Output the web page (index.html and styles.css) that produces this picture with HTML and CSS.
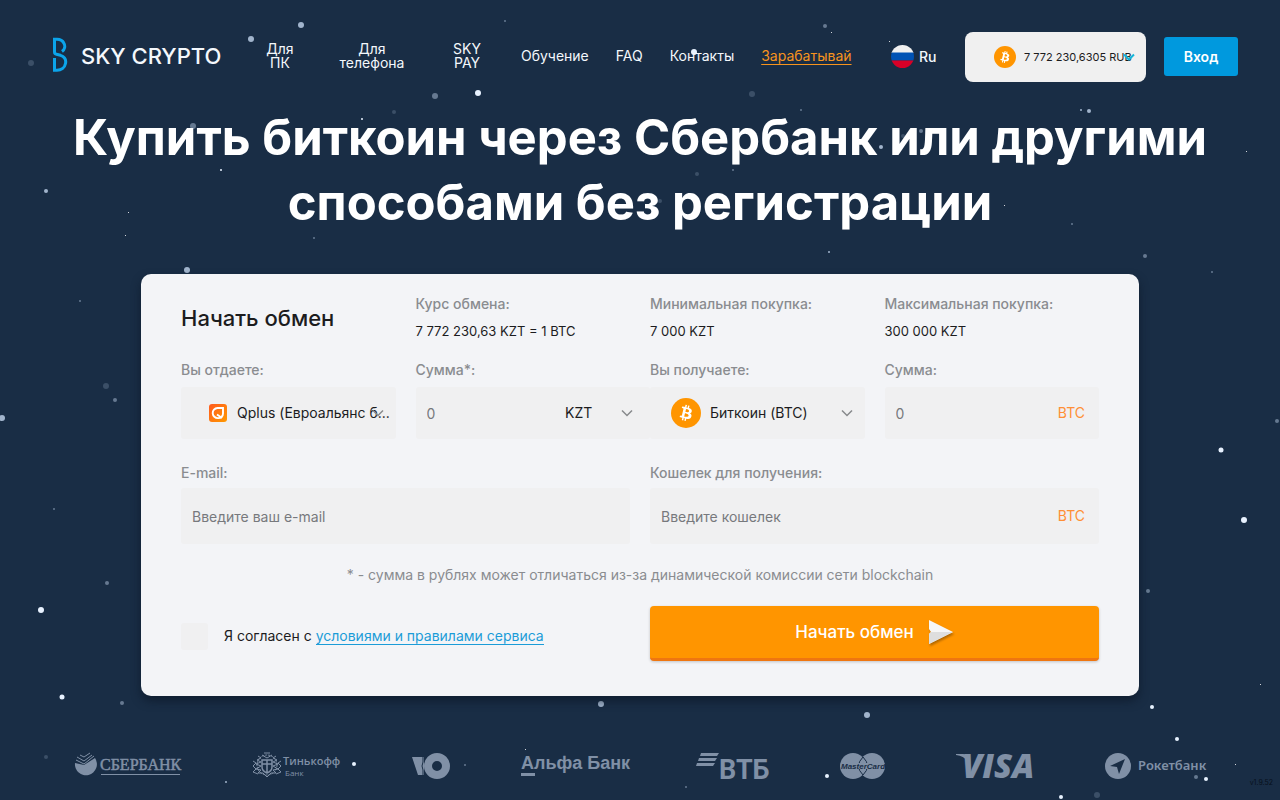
FILE: index.html
```html
<!DOCTYPE html>
<html lang="ru">
<head>
<meta charset="utf-8">
<meta name="viewport" content="width=device-width, initial-scale=1">
<title>Sky Crypto</title>
<link rel="stylesheet" href="styles.css">
</head>
<body>
<div class="page">
<svg class="sky" viewBox="0 0 1280 800" preserveAspectRatio="xMidYMid slice" aria-hidden="true" fill="#c3d6ee">
  <g opacity=".2"><circle cx="31" cy="63" r="3"/><circle cx="752" cy="94" r="3"/><circle cx="106" cy="386" r="3"/><circle cx="697" cy="174" r="2"/><circle cx="1097" cy="795" r="3"/><circle cx="660" cy="201" r="2"/><circle cx="394" cy="112" r="2"/><circle cx="46" cy="757" r="2"/><circle cx="903" cy="136" r="2"/></g>
  <g opacity=".45"><circle cx="435" cy="96" r="3"/><circle cx="193" cy="126" r="3"/><circle cx="825" cy="26" r="2"/><circle cx="505" cy="21" r="1"/><circle cx="1145" cy="256" r="2"/><circle cx="1212" cy="272" r="1"/><circle cx="107" cy="583" r="2"/><circle cx="1148" cy="591" r="2"/><circle cx="115" cy="400" r="2"/><circle cx="122" cy="703" r="2"/><circle cx="1196" cy="777" r="2"/><circle cx="856" cy="133" r="2"/><circle cx="921" cy="131" r="2"/><circle cx="1072" cy="224" r="1"/><circle cx="465" cy="765" r="1"/><circle cx="54" cy="509" r="1"/><circle cx="801" cy="110" r="1"/><circle cx="80" cy="301" r="1"/><circle cx="314" cy="238" r="1"/><circle cx="733" cy="170" r="1"/><circle cx="1277" cy="421" r="2"/><circle cx="686" cy="787" r="1"/></g>
  <g opacity=".8"><circle cx="301" cy="25" r="3"/><circle cx="251" cy="39" r="3"/><circle cx="46" cy="191" r="2"/><circle cx="187" cy="270" r="3"/><circle cx="601" cy="704" r="3"/><circle cx="867" cy="715" r="3"/><circle cx="1089" cy="111" r="2"/><circle cx="1081" cy="110" r="1"/><circle cx="891" cy="198" r="3"/><circle cx="829" cy="252" r="1"/><circle cx="226" cy="782" r="1"/><circle cx="2" cy="418" r="3"/><circle cx="881" cy="147" r="2"/></g>
  <g fill="#e8f2ff"><circle cx="478" cy="93" r="3"/><circle cx="694" cy="52" r="3"/><circle cx="1221" cy="450" r="2.500"/><circle cx="1244" cy="520" r="3"/><circle cx="41" cy="610" r="3"/><circle cx="62" cy="697" r="2.500"/><circle cx="1152" cy="707" r="2"/><circle cx="1177" cy="739" r="2"/><circle cx="354" cy="764" r="2"/><circle cx="827" cy="776" r="2"/><circle cx="1061" cy="797" r="2"/><circle cx="1206" cy="779" r="2"/><circle cx="362" cy="119" r="1"/><circle cx="221" cy="170" r="1"/><circle cx="1021" cy="162" r="1"/></g>
  <g fill="#fff" opacity=".8"><path d="M831 32h1v1h-1zM889 41h1v1h-1zM128 212h1v1h-1zM125 235h1v1h-1zM1154 151h1v1h-1zM1004 205h1v1h-1zM525 749h1v1h-1zM1235 764h1v1h-1zM1260 684h1v1h-1zM1246 151h1v1h-1z"/></g>
</svg>
<svg width="0" height="0" class="defs" aria-hidden="true"><defs>
  <symbol id="btc" viewBox="0 0 32 32"><circle cx="16" cy="16" r="16" fill="#ff9500"/><path transform="translate(2 2) scale(.87)" fill="#fff" d="M23.189 14.02c.314-2.096-1.283-3.223-3.465-3.975l.708-2.84-1.728-.43-.69 2.765c-.454-.114-.92-.22-1.385-.326l.695-2.783L15.596 6l-.708 2.839c-.376-.086-.746-.17-1.104-.26l.002-.009-2.384-.595-.46 1.846s1.283.294 1.256.312c.7.175.826.638.805 1.006l-.806 3.235c.048.012.11.03.18.057l-.183-.045-1.13 4.532c-.086.212-.303.531-.793.41.018.025-1.256-.313-1.256-.313l-.858 1.978 2.25.561c.418.105.828.215 1.231.318l-.715 2.872 1.727.43.708-2.84c.472.127.93.245 1.378.357l-.706 2.828 1.728.43.715-2.866c2.948.558 5.164.333 6.097-2.333.752-2.146-.037-3.385-1.588-4.192 1.13-.26 1.98-1.003 2.207-2.538zm-3.95 5.538c-.533 2.147-4.148.986-5.32.695l.95-3.805c1.172.293 4.929.872 4.37 3.11zm.535-5.569c-.487 1.953-3.495.96-4.47.717l.86-3.45c.975.243 4.118.696 3.61 2.733z"/></symbol>
  <symbol id="chevron" viewBox="0 0 12 8"><path d="M1 1.500l5 5 5-5" fill="none" stroke="currentColor" stroke-width="1.500"/></symbol>
</defs></svg>

<header class="header">
  <a class="logo" href="#">
    <svg class="logo-mark" width="16" height="36" viewBox="0 0 16 36" fill="none" stroke="#0ba4ea" stroke-width="3" aria-hidden="true"><path d="M10 14.500C12.800 12.500 13.500 9 11.800 6 10.500 3.300 8 2.200 5 2.200H2.500V15c0 1.500.8 2 2 2.200l4 1.100c3.800 1.300 5.800 4.300 5 8.200-.8 4.500-4.500 6.700-8.500 6.700H2.500V21"/></svg>
    <span>SKY CRYPTO</span>
  </a>
  <nav class="nav">
    <a class="nav-pc" href="#">Для ПК</a>
    <a class="nav-phone" href="#">Для телефона</a>
    <a class="nav-pay" href="#">SKY PAY</a>
    <a href="#">Обучение</a>
    <a href="#">FAQ</a>
    <a href="#">Контакты</a>
    <a class="nav-earn" href="#">Зарабатывай</a>
  </nav>
  <a class="lang" href="#">
    <svg width="23" height="23" viewBox="0 0 23 23" aria-hidden="true"><clipPath id="flag"><circle cx="11.500" cy="11.500" r="11.500"/></clipPath><g clip-path="url(#flag)"><path fill="#f0f0f0" d="M0 0h23v8H0z"/><path fill="#0052b4" d="M0 7.500h23v8H0z"/><path fill="#d80027" d="M0 15.500h23V23H0z"/></g></svg>
    <span>Ru</span>
  </a>
  <div class="rate">
    <svg class="rate-icon" aria-hidden="true"><use href="#btc"/></svg>
    <select class="rate-select" aria-label="Курс"><option>7 772 230,6305 RUB</option></select>
    <svg class="rate-chevron" viewBox="0 0 12 8" aria-hidden="true"><path d="M1 1.500l5 5 5-5" fill="none" stroke="currentColor" stroke-width="2"/></svg>
  </div>
  <button class="login" type="button">Вход</button>
</header>

<main class="main">
  <h1 class="title">Купить биткоин через Сбербанк или другими способами без регистрации</h1>
  <form class="card">
    <div class="grid">
      <h2 class="card-title">Начать обмен</h2>
      <div class="info"><span class="label">Курс обмена:</span><span class="value">7 772 230,63 KZT = 1 BTC</span></div>
      <div class="info"><span class="label">Минимальная покупка:</span><span class="value">7 000 KZT</span></div>
      <div class="info"><span class="label">Максимальная покупка:</span><span class="value">300 000 KZT</span></div>

      <div class="field">
        <label class="label" for="give">Вы отдаете:</label>
        <div class="box">
          <svg class="icon-q" width="18" height="18" viewBox="0 0 18 18" aria-hidden="true"><defs><linearGradient id="qg" x2="1" y2="1"><stop stop-color="#ff5a1f"/><stop offset="1" stop-color="#ff9a00"/></linearGradient></defs><rect width="18" height="18" rx="3" fill="url(#qg)"/><path d="M8.500 4H14V9.500a4.600 4.600 0 0 1-4.600 4.600H9A5 5 0 0 1 8.500 4z" fill="none" stroke="#fff" stroke-width="1.900"/><path d="M8 10.500l5 3.500" stroke="#fff" stroke-width="1.800"/></svg>
          <select id="give" class="control give"><option>Qplus (Евроальянс б...</option></select>
          <svg class="chevron" aria-hidden="true"><use href="#chevron"/></svg>
        </div>
      </div>
      <div class="field">
        <label class="label" for="sum-give">Сумма*:</label>
        <div class="box box-wide">
          <input id="sum-give" class="control amount" type="text" placeholder="0">
          <select class="control currency" aria-label="Валюта"><option>KZT</option></select>
          <svg class="chevron" aria-hidden="true"><use href="#chevron"/></svg>
        </div>
      </div>
      <div class="field">
        <label class="label" for="get">Вы получаете:</label>
        <div class="box">
          <svg class="icon-btc" aria-hidden="true"><use href="#btc"/></svg>
          <select id="get" class="control get"><option>Биткоин (BTC)</option></select>
          <svg class="chevron" aria-hidden="true"><use href="#chevron"/></svg>
        </div>
      </div>
      <div class="field">
        <label class="label" for="sum-get">Сумма:</label>
        <div class="box">
          <input id="sum-get" class="control amount" type="text" placeholder="0">
          <span class="unit">BTC</span>
        </div>
      </div>

      <div class="field field-wide">
        <label class="label" for="email">E-mail:</label>
        <div class="box box-tall"><input id="email" class="control amount" type="email" placeholder="Введите ваш e-mail"></div>
      </div>
      <div class="field field-wide">
        <label class="label" for="wallet">Кошелек для получения:</label>
        <div class="box box-tall"><input id="wallet" class="control amount" type="text" placeholder="Введите кошелек"><span class="unit">BTC</span></div>
      </div>
    </div>
    <p class="note">* - сумма в рублях может отличаться из-за динамической комиссии сети blockchain</p>
    <div class="actions">
      <div class="agree">
        <input id="agree" type="checkbox">
        <label for="agree">Я согласен с <a href="#">условиями и правилами сервиса</a></label>
      </div>
      <button class="submit" type="submit">
        <span>Начать обмен</span>
        <svg width="26" height="26" viewBox="0 0 26 26" aria-hidden="true"><path d="M1 1l24 12L1 25V15l2-2-2-3z" fill="#f6f6f6"/><path d="M25 13L1 25V15l2-2z" fill="#dedede"/></svg>
      </button>
    </div>
  </form>
</main>

<footer class="partners">
  <svg width="106" height="28" viewBox="0 0 106 28" role="img" aria-label="Сбербанк"><path d="M0 11a11 11 0 1 0 20-5L9 13z"/><path d="M1 8l8 4 10-8M2 5l7 4 8-6M5 3l4 2 6-4" fill="none" stroke="#8090a6"/><text class="p-sber" x="25" y="18">СБЕРБАНК</text><path d="M26 22h79v1H26z"/></svg>
  <svg width="90" height="28" viewBox="0 0 90 28" role="img" aria-label="Тинькофф Банк"><g fill="none" stroke="#8090a6"><path d="M6 4l3 2-4 2 4 2-5 2 5 2-5 3 5 1-3 3 5 0 4 4 4-4 5 0-3-3 5-1-5-3 5-2-5-2 4-2-4-2 3-2M1 9l3 2-3 3 3 3-3 3 5 2M29 9l-3 2 3 3-3 3 3 3-5 2M10 3l5 3 5-3M12 1h6"/><circle cx="15" cy="13" r="10" stroke-dasharray="2 1"/><path d="M10 8h10v7q0 4-5 6-5-2-5-6zM10 12h10M15 8v12" stroke-width="1.500"/></g><text class="p-tink" x="31" y="13">Тинькофф</text><text class="p-tink-sub" x="33" y="24">Банк</text></svg>
  <svg width="38" height="28" viewBox="0 0 38 28" role="img" aria-label="Ю"><path d="M0 5h12v18H6zM25 1a13 13 0 1 0 0 26 13 13 0 0 0 0-26zm0 8a5 5 0 1 1 0 10 5 5 0 0 1 0-10z" fill-rule="evenodd"/><path d="M11 4v6l-1 4 1 4v6" fill="none" stroke="#192d45"/></svg>
  <svg width="105" height="28" viewBox="0 0 105 28" role="img" aria-label="Альфа Банк"><text class="p-alfa" x="0" y="17">Альфа Банк</text><path d="M0 21h14v3H0z"/></svg>
  <svg width="73" height="28" viewBox="0 0 73 28" role="img" aria-label="ВТБ"><path d="M5 1h18l-2 3H4zM3 6h18l-2 3H2zM1 11h18l-2 3H0z"/><text class="p-vtb" x="23" y="27">ВТБ</text></svg>
  <svg width="46" height="28" viewBox="0 0 46 28" role="img" aria-label="MasterCard"><circle cx="13" cy="14" r="13"/><circle cx="32" cy="14" r="13"/><path d="M23 5q-9 9 0 18 9-9 0-18z" fill="none" stroke="#192d45"/><path d="M2 11h42v6H2z"/><text class="p-mc" x="1" y="17">MasterCard</text></svg>
  <svg width="78" height="28" viewBox="0 0 78 28" role="img" aria-label="VISA"><path d="M0 2h7q4 0 5 4l3 14-4-11Q8 4 0 3z"/><text class="p-visa" x="6" y="26">VISA</text></svg>
  <svg width="100" height="28" viewBox="0 0 100 28" role="img" aria-label="Рокетбанк"><circle cx="13" cy="14" r="13"/><path d="M20 7L5 14l7 1 2 7z" fill="#192d45"/><text class="p-roket" x="33" y="18">Рокетбанк</text></svg>
</footer>
<span class="version">v1.9.52</span>
</div>
</body>
</html>
```
FILE: styles.css
```css
* { box-sizing: border-box; }
body {
  margin: 0;
  background: #192d45;
  color: #1c1c1e;
  font: 14px/18px Inter, "Noto Sans", sans-serif;
}
a { color: inherit; text-decoration: none; }
svg { display: block; flex: none; }
h1, h2, p { margin: 0; }
button, input, select { font: inherit; color: inherit; }

.page { position: relative; min-height: 100vh; overflow: hidden; }
.sky { position: absolute; inset: 0; width: 100%; height: 100%; }
.defs { position: absolute; }

.header {
  position: relative;
  display: flex;
  align-items: flex-start;
  height: 105px;
  padding: 32px 42px 0 52px;
  color: #f4f8fc;
}
.logo { display: flex; align-items: center; gap: 13px; height: 48px; width: 204px; font-size: 22px; font-weight: 500; white-space: nowrap; }
.logo-mark { margin-top: -2px; }
.nav { display: flex; flex: 1; align-items: center; gap: 27px; height: 48px; line-height: 14px; text-align: center; }
.nav-pc { width: 48px; }
.nav-phone { width: 82px; }
.nav-pay { width: 54px; padding: 0 10px; }
.nav-earn { color: #f7941d; text-decoration: underline; text-underline-offset: 3px; }
.lang { display: flex; align-items: center; gap: 5px; height: 49px; width: 74px; font-weight: 500; }
.rate {
  position: relative;
  display: flex;
  align-items: center;
  gap: 8px;
  width: 181px;
  height: 50px;
  padding-left: 29px;
  border-radius: 8px;
  background: #f0f0f0;
  color: #1c1c1e;
}
.rate-icon { width: 22px; height: 22px; }
.rate-select { flex: 1; min-width: 0; padding: 0; border: 0; background: none; appearance: none; font-size: 11px; }
.rate-chevron { position: absolute; right: 11px; top: 21px; width: 12px; height: 8px; color: #13b5d8; pointer-events: none; }
.login { width: 74px; height: 39px; margin: 5px 0 0 18px; border: 0; border-radius: 3px; background: #0099de; color: #fff; font-weight: 600; }

.main { position: relative; padding: 0 64px; }
.title { color: #fff; font-size: 49px; line-height: 65px; font-weight: 700; text-align: center; }
.card {
  max-width: 998px;
  margin: 39px auto 0;
  padding: 21px 40px 35px;
  border-radius: 10px;
  background: #f3f4f7;
  box-shadow: 0 5px 10px rgba(10, 20, 35, .6);
}
.grid { display: grid; grid-template-columns: repeat(4, minmax(0, 1fr)); column-gap: 20px; }
.card-title { padding-top: 9px; font-size: 22px; line-height: 28px; font-weight: 500; white-space: nowrap; }
.info { display: flex; flex-direction: column; gap: 9px; height: 66px; white-space: nowrap; }
.label { color: #8a8c90; font-weight: 500; }
.value { font-size: 13px; }
.field { display: flex; flex-direction: column; gap: 8px; height: 103px; }
.field-wide { grid-column: span 2; height: 80px; gap: 6px; }
.box { position: relative; display: flex; align-items: center; height: 52px; border-radius: 3px; background: #f0f0f1; }
.box-wide { margin-right: -20px; }
.box-tall { height: 56px; }
.control { min-width: 0; height: 100%; padding: 0; border: 0; outline: 0; background: none; appearance: none; }
.control::placeholder { color: #77797d; opacity: 1; }
.amount { flex: 1; padding-left: 11px; }
.unit { margin-right: 14px; color: #ff8f35; }
.give { flex: 1; padding-left: 10px; }
.icon-q { margin-left: 28px; }
.currency { width: 85px; }
.icon-btc { width: 30px; height: 30px; margin-left: 21px; }
.get { flex: 1; padding-left: 9px; }
.chevron { position: absolute; right: 12px; top: 22px; width: 12px; height: 8px; color: #87898c; pointer-events: none; }
.box-wide .chevron { right: 17px; }
.note { margin-top: 22px; color: #8a8c90; text-align: center; }
.actions { display: grid; grid-template-columns: 1fr 1fr; align-items: center; column-gap: 20px; margin-top: 22px; }
.agree { display: flex; align-items: center; gap: 16px; padding-top: 5px; }
.agree input { appearance: none; width: 27px; height: 27px; margin: 0; border-radius: 3px; background: #f0f0f1; }
.agree a { color: #1b9cd8; border-bottom: 1px solid #1b9cd8; }
.submit {
  display: flex;
  align-items: center;
  justify-content: center;
  gap: 14px;
  height: 55px;
  border: 0;
  border-bottom: 3px solid #ef7610;
  border-radius: 4px;
  background: #ff9500;
  box-shadow: 0 1px 3px rgba(0, 0, 0, .2);
  color: #fff;
  font-size: 17px;
  font-weight: 500;
}
.submit svg { filter: drop-shadow(1px 2px 1px rgba(0, 0, 0, .3)); }

.partners { position: relative; display: flex; justify-content: space-between; align-items: center; padding: 56px 75px 20px; fill: #8090a6; }
.partners svg { overflow: visible; }
.p-sber { font: 16px "Liberation Serif", serif; stroke: #8090a6; stroke-width: .5px; }
.p-tink { font: 600 11px "Open Sans", sans-serif; }
.p-tink-sub { font: 8px "Open Sans", sans-serif; }
.p-alfa { font: bold 18px "Liberation Sans", sans-serif; }
.p-vtb { font: bold 27px Roboto, sans-serif; }
.p-mc { font: italic bold 8px "Liberation Sans", sans-serif; fill: #192d45; }
.p-visa { font: italic 800 33px "Open Sans", sans-serif; }
.p-roket { font: 600 13px "Noto Sans", sans-serif; }
.version { position: absolute; right: 7px; bottom: 12px; color: #07101c; font-size: 7px; line-height: 10px; }
```
